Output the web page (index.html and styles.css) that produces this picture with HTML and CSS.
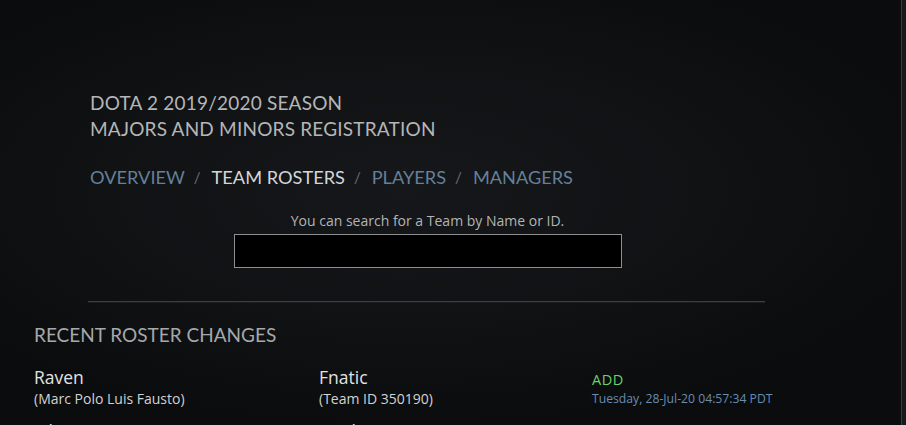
FILE: index.html
```html
<!DOCTYPE html>
<html lang="en">
<head>
    <meta charset="UTF-8">
    <meta name="viewport" content="width=device-width, initial-scale=1.0">
    <title>Dota 2 Majors and Minors Registration</title>
    <link rel="stylesheet" href="styles.css">
</head>
<body>

    <div class="page">
        <!-- Season header -->
        <div class="header">
            <h1 class="title">DOTA 2 2019/2020 SEASON<br>MAJORS AND MINORS REGISTRATION</h1>

            <div class="nav">
                <a href="#" class="nav-link">OVERVIEW</a>
                <span class="sep">/</span>
                <a href="#" class="nav-link active">TEAM ROSTERS</a>
                <span class="sep">/</span>
                <a href="#" class="nav-link">PLAYERS</a>
                <span class="sep">/</span>
                <a href="#" class="nav-link">MANAGERS</a>
            </div>

            <div class="search">
                <label for="teamSearch" class="search-label">You can search for a Team by Name or ID.</label>
                <input type="text" id="teamSearch" class="search-input">
            </div>

            <hr class="divider">
        </div>

        <!-- Recent changes list -->
        <h2 class="section-title">RECENT ROSTER CHANGES</h2>

        <div class="change-row">
            <div class="col-player">
                <div class="name">Raven</div>
                <div class="sub">(Marc Polo Luis Fausto)</div>
            </div>
            <div class="col-team">
                <div class="name">Fnatic</div>
                <div class="sub">(Team ID 350190)</div>
            </div>
            <div class="col-action">
                <div class="action add">ADD</div>
                <div class="date">Tuesday, 28-Jul-20 04:57:34 PDT</div>
            </div>
        </div>

        <div class="change-row">
            <div class="col-player">
                <div class="name">Jabz</div>
                <div class="sub">(Chong Xin Khoo)</div>
            </div>
            <div class="col-team">
                <div class="name">Geek Fam</div>
                <div class="sub">(Team ID 6214973)</div>
            </div>
            <div class="col-action">
                <div class="action add">ADD</div>
                <div class="date">Tuesday, 28-Jul-20 04:50:12 PDT</div>
            </div>
        </div>
    </div>

</body>
</html>
```

FILE: styles.css
```css
html, body {
    height: 100%;
}
body {
    margin: 0;
    font-family: "Open Sans", "Noto Sans", sans-serif;
    background: #0d0f11;
    overflow: hidden;
}
.page {
    height: 425px;
    box-sizing: border-box;
    padding: 90px 0 0 34px;
    background: radial-gradient(ellipse 60% 55% at 45% 45%, #15171a 0%, #101214 55%, #0b0c0e 100%);
    border-right: 1px solid #3b3d40;
    margin-right: 4px;
    box-shadow: 4px 0 0 #18191b;
}
.header {
    width: 677px;
    margin-left: 54px;
}
.title {
    margin: 0 0 0 2px;
    font-family: "Lato", "Open Sans", sans-serif;
    font-size: 19px;
    font-weight: 400;
    line-height: 26px;
    letter-spacing: 0.2px;
    color: #b4b6b8;
}
.nav {
    margin: 22px 0 0 2px;
    font-family: "Lato", "Open Sans", sans-serif;
    font-size: 18.2px;
    line-height: 26px;
    display: flex;
    gap: 9px;
}
.nav-link {
    color: #64809a;
    text-decoration: none;
}
.nav-link.active {
    color: #d4d6d8;
}
.sep {
    color: #6a6e72;
    font-size: 15px;
    margin-right: 2px;
}
.search {
    margin-top: 22px;
    display: flex;
    flex-direction: column;
    align-items: center;
    margin-left: 2px;
}
.search-label {
    font-size: 14px;
    color: #b2b4b6;
    line-height: 18px;
}
.search-input {
    margin-top: 4px;
    width: 388px;
    height: 34px;
    box-sizing: border-box;
    background: #000;
    border: 1px solid #8c8e90;
    outline: none;
    color: #ddd;
}
.divider {
    margin: 33px 0 0 0;
    border: 0;
    border-top: 1px solid #3c3f42;
    border-bottom: 1px solid #1b1d1f;
}
.section-title {
    margin: 19px 0 0 0;
    font-family: "Lato", "Open Sans", sans-serif;
    font-size: 19px;
    font-weight: 400;
    line-height: 26px;
    color: #a6a8aa;
}
.change-row {
    display: flex;
    margin-top: 17px;
}
.change-row + .change-row {
    margin-top: 10px;
}
.col-player {
    width: 285px;
}
.col-team {
    width: 273px;
}
.name {
    font-size: 17.5px;
    line-height: 24px;
    color: #e2e2e2;
}
.sub {
    font-size: 14px;
    line-height: 20px;
    color: #d2d2d2;
}
.col-action {
    padding-top: 6px;
}
.action {
    font-size: 14.5px;
    line-height: 18px;
    letter-spacing: 0.5px;
}
.action.add {
    color: #6ad26a;
}
.date {
    margin-top: 2px;
    font-size: 12.2px;
    line-height: 16px;
    color: #6a8cae;
}
```
